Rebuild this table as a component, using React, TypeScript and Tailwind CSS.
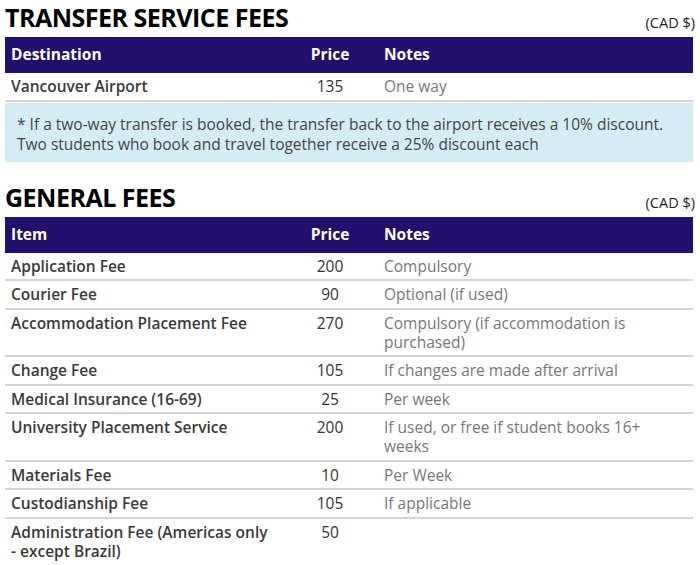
import React from "react";

const font = { fontFamily: '"Open Sans", "Noto Sans", sans-serif' };

type Row = { item: string; price: string; note: string };

const general: Row[] = [
  { item: "Application Fee", price: "200", note: "Compulsory" },
  { item: "Courier Fee", price: "90", note: "Optional (if used)" },
  { item: "Accommodation Placement Fee", price: "270", note: "Compulsory (if accommodation is purchased)" },
  { item: "Change Fee", price: "105", note: "If changes are made after arrival" },
  { item: "Medical Insurance (16-69)", price: "25", note: "Per week" },
  { item: "University Placement Service", price: "200", note: "If used, or free if student books 16+ weeks" },
  { item: "Materials Fee", price: "10", note: "Per Week" },
  { item: "Custodianship Fee", price: "105", note: "If applicable" },
  { item: "Administration Fee (Americas only - except Brazil)", price: "50", note: "" },
];

function Title({ text }: { text: string }) {
  return (
    <div className="flex items-end justify-between h-[37px] pb-[5px]">
      <h2 className="text-[25px] leading-[30px] font-bold text-black tracking-[-0.5px]">{text}</h2>
      <span className="text-[14.5px] leading-5 text-[#222] mb-[-1px]">(CAD $)</span>
    </div>
  );
}

function Header({ first }: { first: string }) {
  return (
    <div className="grid grid-cols-[280px_90px_1fr] bg-[#230f6e] text-white font-bold text-[15.5px] h-[36px] items-center mr-[2px]">
      <div className="pl-[6px]">{first}</div>
      <div className="text-center">Price</div>
      <div className="pl-[9px]">Notes</div>
    </div>
  );
}

function DataRow({ r, last }: { r: Row; last?: boolean }) {
  return (
    <div
      className={
        "grid grid-cols-[280px_90px_1fr] text-[15.5px] leading-[19px] pt-[4px] pb-[3.5px] mr-[2px] " +
        (last ? "" : "border-b-2 border-[#d4d4d4]")
      }
    >
      <div className="pl-[6px] pr-[10px] text-[#3a3a3a] font-semibold">{r.item}</div>
      <div className="text-center text-[#333]">{r.price}</div>
      <div className="pl-[9px] pr-[12px] text-[#777]">{r.note}</div>
    </div>
  );
}

export default function App() {
  return (
    <div className="w-[700px] h-[565px] overflow-hidden bg-white px-[5px]" style={font}>
      <Title text="TRANSFER SERVICE FEES" />
      <Header first="Destination" />
      <DataRow r={{ item: "Vancouver Airport", price: "135", note: "One way" }} />
      <div className="bg-[#d4ecf5] text-[#444] text-[15.5px] leading-5 px-[12px] pt-[11px] pb-[8px] mr-[2px] mt-[1px]">
        <p>* If a two-way transfer is booked, the transfer back to the airport receives a 10% discount.</p>
        <p>Two students who book and travel together receive a 25% discount each</p>
      </div>
      <div className="mt-[18px]">
        <Title text="GENERAL FEES" />
      </div>
      <Header first="Item" />
      {general.map((r, i) => (
        <DataRow key={i} r={r} last={i === general.length - 1} />
      ))}
    </div>
  );
}
